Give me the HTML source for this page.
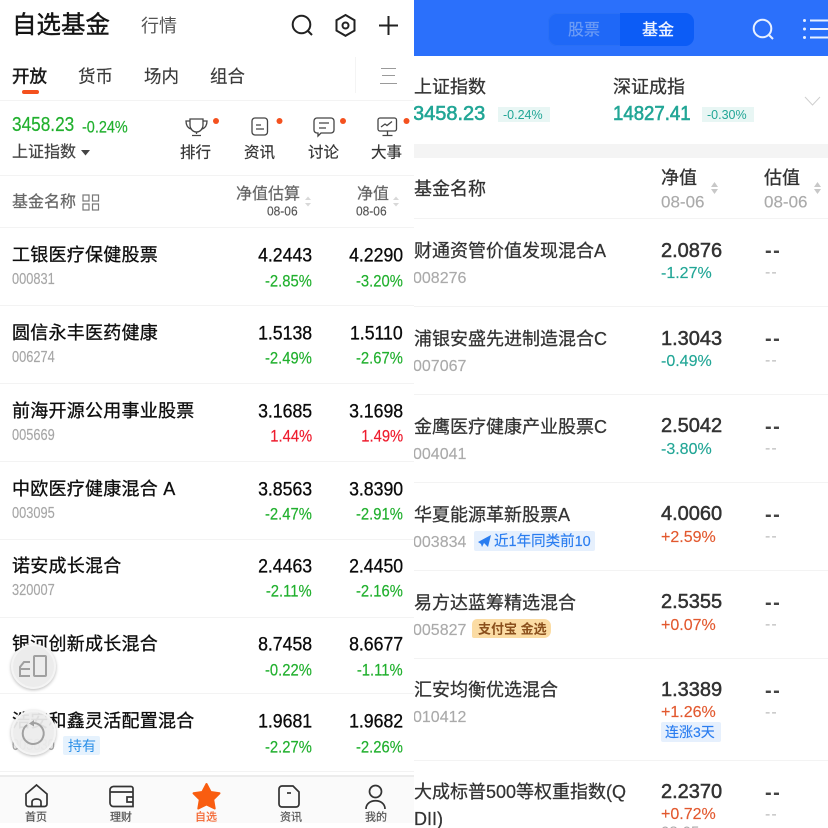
<!DOCTYPE html>
<html><head><meta charset="utf-8">
<style>
html,body{margin:0;padding:0;width:828px;height:828px;overflow:hidden;background:#fff;font-family:"Liberation Sans","Noto Sans CJK SC",sans-serif}
#w{position:relative;width:828px;height:828px;overflow:hidden;filter:blur(.35px)}
.p{position:absolute;overflow:hidden;top:0;height:828px}
.t,.r{position:absolute;white-space:nowrap;line-height:1}
.t{transform:translateY(-50%);transform-origin:left center}
.r{transform:translateY(-50%);text-align:right}
.h{position:absolute;height:1px;background:#f3f3f3}
.t.n{font-size:18px;color:#0e0e0e;letter-spacing:.25px;-webkit-text-stroke:.3px #0e0e0e;transform:translateY(calc(-50% + 1px))}
.t.c{font-size:16px;color:#a6a6a6;transform:translateY(calc(-50% + 1px)) scaleX(.8);-webkit-text-stroke:.15px #a6a6a6}
.v{font-size:19px;color:#0a0a0a;transform:translateY(calc(-50% + 1px)) scaleX(.93);transform-origin:right center;-webkit-text-stroke:.3px #0a0a0a}
.q{font-size:17px;transform:translateY(-50%) scaleX(.87);transform-origin:right center;-webkit-text-stroke:.2px currentColor}
.g{color:#21b02e}.d{color:#ee1c2e}
.rn{font-size:18px;color:#333;-webkit-text-stroke:.25px #333}
.t.rc{font-size:16px;color:#aaa;-webkit-text-stroke:.15px #aaa;transform:translateY(calc(-50% + 1px))}
.rv{font-size:20px;color:#333;-webkit-text-stroke:.5px #333}
.t.rq{font-size:16px;-webkit-text-stroke:.15px currentColor;transform:translateY(calc(-50% + 1px))}
.tl{color:#22a696}.or{color:#e2592f}
.dd{font-size:20px;color:#444;font-weight:bold;letter-spacing:1.5px}
.de{font-size:16px;color:#bbb;letter-spacing:1px}
.lb{font-size:15.5px;color:#333;-webkit-text-stroke:.2px #333}
.tb{font-size:11px;color:#555;-webkit-text-stroke:.2px #555}
svg{position:absolute;overflow:visible}
</style></head><body><div id="w">

<div class="p" style="left:0;width:414px">
<div class="t" style="left:12px;top:26px;font-size:24.500px;color:#141414;-webkit-text-stroke:.4px #141414">自选基金</div>
<div class="t" style="left:141px;top:26px;font-size:18px;color:#555">行情</div>
<svg style="left:0;top:0" width="414" height="50" fill="none" stroke="#222" stroke-width="2"><circle cx="301.500" cy="24.500" r="8.800"/><path d="M308 31l4 4"/><path d="M345.500 15l9 5.200v10.400l-9 5.200-9-5.200V20.200z"/><circle cx="345.500" cy="25.500" r="3"/><path d="M379 25.500h19M388.500 16v19"/></svg>

<div class="t" style="left:12px;top:77px;font-size:17.500px;color:#1a1a1a;-webkit-text-stroke:.5px #1a1a1a">开放</div>
<div class="t" style="left:78px;top:77px;font-size:17.500px;color:#3a3a3a;-webkit-text-stroke:.15px #3a3a3a">货币</div>
<div class="t" style="left:144px;top:77px;font-size:17.500px;color:#3a3a3a;-webkit-text-stroke:.15px #3a3a3a">场内</div>
<div class="t" style="left:210px;top:77px;font-size:17.500px;color:#3a3a3a;-webkit-text-stroke:.15px #3a3a3a">组合</div>
<div style="position:absolute;left:22px;top:90px;width:17px;height:4px;border-radius:2px;background:#f4511e"></div>
<div style="position:absolute;left:355px;top:57px;width:1px;height:36px;background:#f4f4f4"></div>
<svg style="left:0;top:0" width="414" height="100" fill="none" stroke="#9a9a9a" stroke-width="1"><path d="M381 68.500h15M382 75.500h13M380 83.500h17"/></svg>
<div class="h" style="left:0;top:100px;width:414px"></div>

<div class="t g" style="left:11.500px;top:125px;font-size:20.500px;transform:translateY(-50%) scaleX(.84);-webkit-text-stroke:.2px #21b02e">3458.23</div>
<div class="t g" style="left:82px;top:127px;font-size:17px;transform:translateY(-50%) scaleX(.85);-webkit-text-stroke:.2px #21b02e">-0.24%</div>
<div class="t" style="left:12px;top:153px;font-size:16px;color:#444;-webkit-text-stroke:.2px #444">上证指数</div>
<svg style="left:0;top:0" width="414" height="176"><path d="M81 150h9l-4.500 5.500z" fill="#444"/>
<g fill="#f4511e"><circle cx="216" cy="121" r="3"/><circle cx="279.500" cy="121" r="3"/><circle cx="343" cy="121" r="3"/><circle cx="406.500" cy="121" r="3"/></g>
<g fill="none" stroke="#444" stroke-width="1.300">
<path d="M190 119h13v6c0 4-3 7-6.500 7s-6.500-3-6.500-7z"/><path d="M190 121h-4c0 5 2 7 5 8M203 121h4c0 5-2 7-5 8M196.500 132v2M192 135.500h9"/>
<rect x="252" y="118" width="15.500" height="17" rx="3"/><path d="M256 125h5M256 129h8"/>
<path d="M317 118h14a3 3 0 0 1 3 3v9a3 3 0 0 1-3 3h-10l-3 3v-3h-1a3 3 0 0 1-3-3v-9a3 3 0 0 1 3-3z"/><path d="M319 123h10M319 128h7"/>
<rect x="378" y="118" width="18.500" height="13" rx="2"/><path d="M387.500 131v4M382.500 135.500h10M381 127l4-3 2 1.500 5-4"/>
</g></svg>
<div class="t lb" style="left:180px;top:153px">排行</div>
<div class="t lb" style="left:244px;top:153px">资讯</div>
<div class="t lb" style="left:308px;top:153px">讨论</div>
<div class="t lb" style="left:371px;top:153px">大事</div>
<div class="h" style="left:0;top:175px;width:414px"></div>

<div class="t" style="left:12px;top:203px;font-size:16px;color:#666;-webkit-text-stroke:.2px #666">基金名称</div>
<svg style="left:0;top:0" width="414" height="228"><g fill="none" stroke="#777" stroke-width="1.200"><rect x="83" y="195" width="6" height="6"/><rect x="92.500" y="195" width="6" height="6"/><rect x="83" y="204" width="6" height="6"/><rect x="92.500" y="204" width="6" height="6"/></g>
<g fill="#d8d8d8"><path d="M305 200l3-3.500 3 3.500zM305 203l3 3.500 3-3.500zM393 200l3-3.500 3 3.500zM393 203l3 3.500 3-3.500z"/></g></svg>
<div class="t" style="left:236px;top:195px;font-size:16px;color:#666;-webkit-text-stroke:.2px #666">净值估算</div>
<div class="t" style="left:267px;top:211px;font-size:13px;color:#555;transform:translateY(-50%) scaleX(.92);-webkit-text-stroke:.15px #555">08-06</div>
<div class="t" style="left:357px;top:195px;font-size:16px;color:#666;-webkit-text-stroke:.2px #666">净值</div>
<div class="t" style="left:356px;top:211px;font-size:13px;color:#555;transform:translateY(-50%) scaleX(.92);-webkit-text-stroke:.15px #555">08-06</div>
<div class="h" style="left:0;top:227px;width:414px"></div>

<div class="t n" style="left:12px;top:254px">工银医疗保健股票</div><div class="t c" style="left:12px;top:279px">000831</div>
<div class="r v" style="right:102px;top:255px">4.2443</div><div class="r v" style="right:11px;top:255px">4.2290</div>
<div class="r q g" style="right:102px;top:281px">-2.85%</div><div class="r q g" style="right:11px;top:281px">-3.20%</div>
<div class="h" style="left:0;top:305px;width:414px"></div>

<div class="t n" style="left:12px;top:332px">圆信永丰医药健康</div><div class="t c" style="left:12px;top:357px">006274</div>
<div class="r v" style="right:102px;top:333px">1.5138</div><div class="r v" style="right:11px;top:333px">1.5110</div>
<div class="r q g" style="right:102px;top:358px">-2.49%</div><div class="r q g" style="right:11px;top:358px">-2.67%</div>
<div class="h" style="left:0;top:383px;width:414px"></div>

<div class="t n" style="left:12px;top:410px">前海开源公用事业股票</div><div class="t c" style="left:12px;top:435px">005669</div>
<div class="r v" style="right:102px;top:411px">3.1685</div><div class="r v" style="right:11px;top:411px">3.1698</div>
<div class="r q d" style="right:102px;top:436px">1.44%</div><div class="r q d" style="right:11px;top:436px">1.49%</div>
<div class="h" style="left:0;top:461px;width:414px"></div>

<div class="t n" style="left:12px;top:488px">中欧医疗健康混合 A</div><div class="t c" style="left:12px;top:513px">003095</div>
<div class="r v" style="right:102px;top:489px">3.8563</div><div class="r v" style="right:11px;top:489px">3.8390</div>
<div class="r q g" style="right:102px;top:514px">-2.47%</div><div class="r q g" style="right:11px;top:514px">-2.91%</div>
<div class="h" style="left:0;top:539px;width:414px"></div>

<div class="t n" style="left:12px;top:565px">诺安成长混合</div><div class="t c" style="left:12px;top:590px">320007</div>
<div class="r v" style="right:102px;top:566px">2.4463</div><div class="r v" style="right:11px;top:566px">2.4450</div>
<div class="r q g" style="right:102px;top:591px">-2.11%</div><div class="r q g" style="right:11px;top:591px">-2.16%</div>
<div class="h" style="left:0;top:617px;width:414px"></div>

<div class="t n" style="left:12px;top:643px">银河创新成长混合</div>
<div class="r v" style="right:102px;top:644px">8.7458</div><div class="r v" style="right:11px;top:644px">8.6677</div>
<div class="r q g" style="right:102px;top:670px">-0.22%</div><div class="r q g" style="right:11px;top:670px">-1.11%</div>
<div class="h" style="left:0;top:693px;width:414px"></div>

<div class="t n" style="left:12px;top:720px">浩安和鑫灵活配置混合</div><div class="t c" style="left:12px;top:745px">005830</div>
<div style="position:absolute;left:63px;top:736px;width:37px;height:19px;background:#e6f2fd;border-radius:2px"></div>
<div class="t" style="left:68px;top:746px;font-size:14px;color:#2a8fe8">持有</div>
<div class="r v" style="right:102px;top:721px">1.9681</div><div class="r v" style="right:11px;top:721px">1.9682</div>
<div class="r q g" style="right:102px;top:747px">-2.27%</div><div class="r q g" style="right:11px;top:747px">-2.26%</div>
<div class="h" style="left:0;top:771px;width:414px"></div>

<div style="position:absolute;left:0;top:775px;width:414px;height:48px;background:#fafafa;border-top:2px solid #ececec;box-sizing:border-box"></div>
<svg style="left:0;top:0" width="414" height="828" fill="none" stroke="#333" stroke-width="1.700">
<path d="M26 794l10.500-9 10.500 9v10a2.500 2.500 0 0 1-2.500 2.500h-16a2.500 2.500 0 0 1-2.500-2.500z"/><path d="M32 806v-4c0-4 9-4 9 0v4"/>
<path d="M110 792v11a3.500 3.500 0 0 0 3.500 3.500H133v-18a2 2 0 0 0-2-2h-17.500a3.500 3.500 0 0 0-3.500 3.500v2h23"/><path d="M133 797h-6v5h6"/>
<path d="M282 786h11l6 6v12a3 3 0 0 1-3 3h-14a3 3 0 0 1-3-3v-15a3 3 0 0 1 3-3z"/><path d="M287 793h4"/>
<circle cx="375.500" cy="791.500" r="6"/><path d="M366 809c0-11 19-11 19 0"/>
</svg>
<svg style="left:0;top:0" width="414" height="828"><path d="M206.500 784l4.200 8 8.800 1.300-6.300 6.300 1.500 8.900-8.200-4-8.200 4 1.500-8.900-6.300-6.300 8.800-1.300z" fill="#f95d10" stroke="#f95d10" stroke-width="2" stroke-linejoin="round"/></svg>
<div class="t tb" style="left:25px;top:818px">首页</div>
<div class="t tb" style="left:110px;top:818px">理财</div>
<div class="t tb" style="left:195px;top:818px;color:#f4622a;-webkit-text-stroke:.2px #f4622a">自选</div>
<div class="t tb" style="left:280px;top:818px">资讯</div>
<div class="t tb" style="left:365px;top:818px">我的</div>
<div style="position:absolute;left:0;top:823px;width:414px;height:5px;background:#fff"></div>

<div style="position:absolute;left:11px;top:644px;width:45px;height:45px;border-radius:50%;background:#ececec;box-shadow:inset 0 0 0 2px #f4f4f4,0 1px 3px rgba(0,0,0,.28)"></div>
<div style="position:absolute;left:11px;top:710px;width:45px;height:45px;border-radius:50%;background:rgba(236,236,236,.94);box-shadow:inset 0 0 0 2px #f4f4f4,0 1px 3px rgba(0,0,0,.28)"></div>
<svg style="left:0;top:0" width="414" height="828" fill="none" stroke="#a0a0a0" stroke-width="2"><path d="M30 676h-10v-9l4-5h6M30 669h-9"/><rect x="34" y="656" width="12" height="20" rx="1"/><path d="M27 725a10.500 10.500 0 1 0 7-2"/><path d="M34 720l-5 3.500 5 3" fill="#a0a0a0" stroke="none"/></svg>
</div>

<div class="p" style="left:414px;width:414px">
<div style="position:absolute;left:0;top:0;width:414px;height:56px;background:#2b70fb"></div>
<div style="position:absolute;left:134px;top:13px;width:146px;height:33px;border-radius:9px;background:#1f68f7;box-shadow:inset 0 0 0 1px #2a6ff5"></div>
<div style="position:absolute;left:206px;top:13px;width:74px;height:33px;border-radius:0 9px 9px 0;background:#0c5cf6"></div>
<div class="t" style="left:154px;top:31px;font-size:16px;color:#6d9cf5;-webkit-text-stroke:.2px #6d9cf5">股票</div>
<div class="t" style="left:228px;top:31px;font-size:16px;color:#f2f6ff;-webkit-text-stroke:.3px #f2f6ff">基金</div>
<svg style="left:0;top:0" width="414" height="56" fill="none" stroke="#e8f0ff" stroke-width="2"><circle cx="348.500" cy="28.500" r="8.800"/><path d="M355 35l4 4"/><path d="M396 20.500h18M396 29h18M396 37.500h18"/><g fill="#e8f0ff" stroke="none"><circle cx="390.500" cy="20.500" r="1.500"/><circle cx="390.500" cy="29" r="1.500"/><circle cx="390.500" cy="37.500" r="1.500"/></g></svg>

<div class="t" style="left:0;top:87px;font-size:18px;color:#333;-webkit-text-stroke:.25px #333">上证指数</div>
<div class="t tl" style="left:-1px;top:114px;font-size:20px;-webkit-text-stroke:.6px #22a696">3458.23</div>
<div style="position:absolute;left:84px;top:107px;width:52px;height:15px;background:#e8f6f4"></div>
<div class="t tl" style="left:89px;top:115px;font-size:12.500px">-0.24%</div>
<div class="t" style="left:199px;top:87px;font-size:18px;color:#333;-webkit-text-stroke:.25px #333">深证成指</div>
<div class="t tl" style="left:199px;top:114px;font-size:20px;transform:translateY(-50%) scaleX(.93);-webkit-text-stroke:.6px #22a696">14827.41</div>
<div style="position:absolute;left:288px;top:107px;width:52px;height:15px;background:#e8f6f4"></div>
<div class="t tl" style="left:293px;top:115px;font-size:12.500px">-0.30%</div>
<svg style="left:0;top:0" width="414" height="120" fill="none" stroke="#cfcfcf" stroke-width="1"><path d="M391 97l7.500 8 7.500-8"/></svg>
<div style="position:absolute;left:0;top:144px;width:414px;height:14px;background:#f4f4f4"></div>

<div class="t" style="left:0;top:189px;font-size:18px;color:#333;-webkit-text-stroke:.25px #333">基金名称</div>
<div class="t" style="left:247px;top:178px;font-size:18px;color:#333;-webkit-text-stroke:.3px #333">净值</div>
<div class="t" style="left:247px;top:202px;font-size:17px;color:#aaa;-webkit-text-stroke:.15px #aaa">08-06</div>
<div class="t" style="left:350px;top:178px;font-size:18px;color:#333;-webkit-text-stroke:.3px #333">估值</div>
<div class="t" style="left:350px;top:202px;font-size:17px;color:#aaa;-webkit-text-stroke:.15px #aaa">08-06</div>
<svg style="left:0;top:0" width="414" height="220"><path d="M297 187l3.500-5 3.500 5zM297 189l3.500 5 3.500-5zM400 187l3.500-5 3.500 5zM400 189l3.500 5 3.500-5z" fill="#c8c8c8"/></svg>
<div class="h" style="left:0;top:218px;width:414px"></div>

<div class="t rn" style="left:0;top:251px">财通资管价值发现混合A</div><div class="t rc" style="left:-1px;top:278px">008276</div>
<div class="t rv" style="left:247px;top:251px">2.0876</div><div class="t rq tl" style="left:247px;top:273px">-1.27%</div>
<div class="t dd" style="left:351px;top:251px">--</div><div class="t de" style="left:351px;top:273px">--</div>
<div class="h" style="left:0;top:306px;width:414px"></div>

<div class="t rn" style="left:0;top:339px">浦银安盛先进制造混合C</div><div class="t rc" style="left:-1px;top:366px">007067</div>
<div class="t rv" style="left:247px;top:339px">1.3043</div><div class="t rq tl" style="left:247px;top:361px">-0.49%</div>
<div class="t dd" style="left:351px;top:339px">--</div><div class="t de" style="left:351px;top:361px">--</div>
<div class="h" style="left:0;top:394px;width:414px"></div>

<div class="t rn" style="left:0;top:427px">金鹰医疗健康产业股票C</div><div class="t rc" style="left:-1px;top:454px">004041</div>
<div class="t rv" style="left:247px;top:426px">2.5042</div><div class="t rq tl" style="left:247px;top:449px">-3.80%</div>
<div class="t dd" style="left:351px;top:427px">--</div><div class="t de" style="left:351px;top:449px">--</div>
<div class="h" style="left:0;top:482px;width:414px"></div>

<div class="t rn" style="left:0;top:515px">华夏能源革新股票A</div><div class="t rc" style="left:-1px;top:542px">003834</div>
<div style="position:absolute;left:60px;top:531px;width:121px;height:20px;background:#e6f0fd;border-radius:2px"></div>
<svg style="left:0;top:0" width="414" height="560"><path d="M64 542l13-7-3 12-4-4-2 4-1-3z" fill="#2a7df0"/></svg>
<div class="t" style="left:80px;top:542px;font-size:14.500px;color:#2a7df0;-webkit-text-stroke:.15px #2a7df0">近1年同类前10</div>
<div class="t rv" style="left:247px;top:514px">4.0060</div><div class="t rq or" style="left:247px;top:537px">+2.59%</div>
<div class="t dd" style="left:351px;top:515px">--</div><div class="t de" style="left:351px;top:537px">--</div>
<div class="h" style="left:0;top:570px;width:414px"></div>

<div class="t rn" style="left:0;top:603px">易方达蓝筹精选混合</div><div class="t rc" style="left:-1px;top:630px">005827</div>
<div style="position:absolute;left:58px;top:619px;width:79px;height:19px;background:#fbdca4;border-radius:5px 7px 7px 2px"></div>
<div class="t" style="left:64px;top:629px;font-size:13px;color:#8a4f1c;font-weight:bold;white-space:pre">支付宝 金选</div>
<div class="t rv" style="left:247px;top:602px">2.5355</div><div class="t rq or" style="left:247px;top:625px">+0.07%</div>
<div class="t dd" style="left:351px;top:603px">--</div><div class="t de" style="left:351px;top:625px">--</div>
<div class="h" style="left:0;top:658px;width:414px"></div>

<div class="t rn" style="left:0;top:690px">汇安均衡优选混合</div><div class="t rc" style="left:-1px;top:717px">010412</div>
<div class="t rv" style="left:247px;top:690px">1.3389</div><div class="t rq or" style="left:247px;top:712px">+1.26%</div>
<div style="position:absolute;left:247px;top:722px;width:60px;height:20px;background:#e6f0fd;border-radius:2px"></div>
<div class="t" style="left:251px;top:732px;font-size:14px;color:#2a7df0;-webkit-text-stroke:.15px #2a7df0">连涨3天</div>
<div class="t dd" style="left:351px;top:691px">--</div><div class="t de" style="left:351px;top:713px">--</div>
<div class="h" style="left:0;top:760px;width:414px"></div>

<div class="t rn" style="left:0;top:792px">大成标普500等权重指数(Q</div>
<div class="t rn" style="left:0;top:819px">DII)</div>
<div class="t rv" style="left:247px;top:792px">2.2370</div><div class="t rq or" style="left:247px;top:814px">+0.72%</div>
<div class="t" style="left:247px;top:832px;font-size:15px;color:#aaa">08-05</div>
<div class="t dd" style="left:351px;top:793px">--</div><div class="t de" style="left:351px;top:815px">--</div>
</div>

</div></body></html>
